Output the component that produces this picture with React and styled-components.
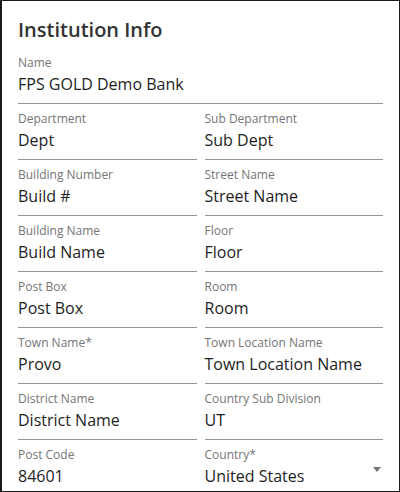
import React from 'react';
import styled, { createGlobalStyle } from 'styled-components';

const GlobalStyle = createGlobalStyle`
  html, body {
    margin: 0;
    padding: 0;
    background: #ffffff;
  }
  body {
    font-family: "Open Sans", "Noto Sans", sans-serif;
  }
`;

const rows = [
  [{ label: 'Department', value: 'Dept' }, { label: 'Sub Department', value: 'Sub Dept' }],
  [{ label: 'Building Number', value: 'Build #' }, { label: 'Street Name', value: 'Street Name' }],
  [{ label: 'Building Name', value: 'Build Name' }, { label: 'Floor', value: 'Floor' }],
  [{ label: 'Post Box', value: 'Post Box' }, { label: 'Room', value: 'Room' }],
  [{ label: 'Town Name*', value: 'Provo' }, { label: 'Town Location Name', value: 'Town Location Name' }],
  [{ label: 'District Name', value: 'District Name' }, { label: 'Country Sub Division', value: 'UT' }],
  [{ label: 'Post Code', value: '84601' }, { label: 'Country*', value: 'United States', select: true }],
];

function Field({ label, value, select }) {
  return (
    <FieldStyled>
      <label>{label}</label>
      <div className="input">
        <span>{value}</span>
        {select && (
          <svg width="8" height="5" viewBox="0 0 8 5">
            <path d="M0 0h8L4 5z" fill="#757575" />
          </svg>
        )}
      </div>
    </FieldStyled>
  );
}

function App() {
  return (
    <>
      <GlobalStyle />
      <PanelStyled>
        <h2>Institution Info</h2>
        <div className="form">
          <div className="full">
            <Field label="Name" value="FPS GOLD Demo Bank" />
          </div>
          {rows.map((row) =>
            row.map((f) => <Field key={f.label} {...f} />)
          )}
        </div>
      </PanelStyled>
    </>
  );
}

const PanelStyled = styled.div`
  width: 400px;
  height: 492px;
  box-sizing: border-box;
  border: 1px solid #1a1a1a;
  border-left-width: 2px;
  padding: 17px 16px 0 16px;
  overflow: hidden;
  background: #fff;

  h2 {
    margin: 0 0 6px;
    font-size: 20px;
    line-height: 24px;
    font-weight: 600;
    color: #333333;
  }

  .form {
    display: grid;
    grid-template-columns: 1fr 1fr;
    column-gap: 8px;
    .full {
      grid-column: 1 / -1;
    }
  }
`;

const FieldStyled = styled.div`
  height: 56px;
  box-sizing: border-box;
  padding-top: 7px;
  border-bottom: 1px solid #949494;

  label {
    display: block;
    font-size: 12px;
    line-height: 16px;
    color: #757575;
  }

  .input {
    display: flex;
    align-items: center;
    justify-content: space-between;
    margin-top: 2px;
    font-size: 16px;
    line-height: 22px;
    color: #1e1e1e;
    svg {
      margin-right: 2px;
      margin-top: -14px;
    }
  }
`;

export default App;
